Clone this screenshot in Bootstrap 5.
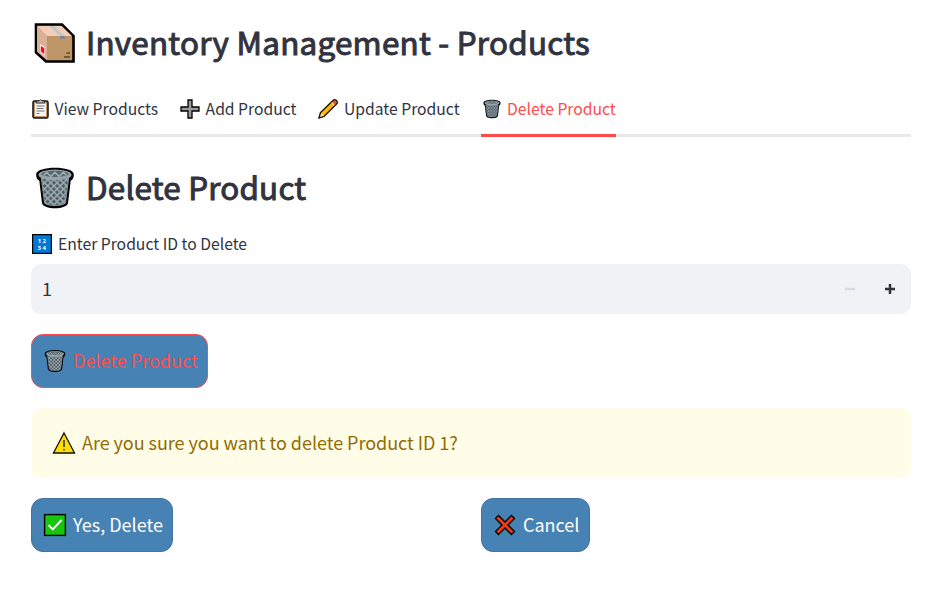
<!DOCTYPE html>
<html lang="en">
<head>
<meta charset="utf-8">
<meta name="viewport" content="width=device-width, initial-scale=1">
<title>Inventory Management</title>
<link href="https://cdn.jsdelivr.net/npm/bootstrap@5.3.0/dist/css/bootstrap.min.css" rel="stylesheet">
<style>
body{font-family:"Noto Sans CJK SC","Source Sans Pro",sans-serif;color:#31333f;background:#fff;overflow:hidden}
.page{width:880px;margin-left:31px;padding-top:20px}
.title{font-size:31.4px;line-height:46px;height:46px;font-weight:400;-webkit-text-stroke:1px #31333f;letter-spacing:.25px;margin:0;white-space:nowrap}
.title svg{width:48px;height:46px;flex:none;margin-right:7px;-webkit-text-stroke:0}
.title span{padding-bottom:2px}
.title-sub{margin-top:28px;letter-spacing:.2px}
.tabs{margin-top:20px;height:51px;border-bottom:3px solid #e8e8eb;gap:21px}
.tabs .nav-link{color:#31333f;font-size:15.7px;line-height:24px;padding:0;height:51px;padding-bottom:2px;border-bottom:3px solid transparent;white-space:nowrap}
.tabs .nav-link.active{color:#ff4b4b;border-color:#ff4b4b}
.tabs svg{width:20px;height:20px;flex:none;margin:0 5.5px 0 1px}
.tabs .nav-link:first-child svg{margin:0 3.4px 0 0}
.field-label{font-size:15.7px;line-height:24px;height:24px;margin-top:21px;margin-bottom:8px}
.field-label svg{width:20px;height:20px;margin:0 6px 0 1px}
.number{height:50px;background:#f0f2f6;border-radius:10px;font-size:18px;padding-left:11px;padding-right:1px}
.number button{width:40px;height:50px;border:0;background:none;padding:0}
.number span{padding-bottom:2px}
.btn-steel{background:#4682b4;border:1px solid #4174a2;border-radius:12px;color:#fff;height:54px;font-size:18px;line-height:28px;padding:0 0 0 11px;white-space:nowrap;text-align:left}
.btn-steel:hover{background:#4682b4;color:#fff}
.btn-steel svg{width:24px;height:24px;flex:none;margin-right:6px}
.btn-steel span,.notice span{padding-bottom:2px}
.btn-steel.danger,.btn-steel.danger:hover{color:#ff4b4b;border-color:#ff4b4b}
.btn-delete{width:177px;margin-top:20px}
.btn-yes{width:142px}
.btn-cancel{width:109px}
.choice{width:450px}
.notice{height:70px;background:#fffce7;border:0;border-radius:10px;color:#926c05;font-size:18px;line-height:28px;letter-spacing:-.04px;padding:0 0 0 21px;margin:20px 0}
.notice svg{width:24px;height:24px;margin-right:6px}
</style>
<script src="https://cdn.jsdelivr.net/npm/bootstrap@5.3.0/dist/js/bootstrap.bundle.min.js"></script>
</head>
<body>
<svg width="0" height="0" class="position-absolute" aria-hidden="true">
  <defs>
    <pattern id="mesh" width="6" height="6" patternUnits="userSpaceOnUse" x="1" y="1">
      <rect width="6" height="6" fill="#4d5960"/><path d="M0 0l6 6M6 0L0 6" stroke="#9aabb2" stroke-width="1.5"/>
    </pattern>
    <symbol id="bin" viewBox="0 0 40 42">
      <path d="M2 8C2 -.5 38 -.5 38 8C38 11 37 13 35 14L32.500 35C32 42 8 42 7.500 35L5 14C3 13 2 11 2 8Z" fill="#000"/>
      <path d="M7 12L10 35C11 38.500 29 38.500 30 35L33 12Z" fill="url(#mesh)" stroke="#849399" stroke-width="1"/>
      <ellipse cx="20" cy="8.500" rx="15.800" ry="5.200" fill="#94a4ab"/>
      <ellipse cx="20" cy="7.500" rx="13" ry="3" fill="#59666c"/>
      <path d="M9 9l3-3 4 4 4-4 4 4 4-4 3 3" fill="none" stroke="#a4b1b5" stroke-width="1.500"/>
    </symbol>
  </defs>
</svg>
<main class="page">
  <h1 class="title d-flex align-items-center"><svg viewBox="0 0 48 46"><path d="M5 4.500H31L42.500 16V41.500H15L5 32.500Z" fill="#be9667" stroke="#000" stroke-width="2.600"/><path d="M6 6H30.500L41 16H16Z" fill="#f3cdb8"/><path d="M6 6L16 16V40L6 31.500Z" fill="#dcb094"/><path d="M18 6h5l11 10h-5Z" fill="#c2c6c8"/><path d="M29 16h5v3h-5Z" fill="#87888a"/><path d="M9 24l5 3v9l-5-4Z" fill="#fff0ec"/><path d="M9.800 26l3.500 2v6l-3.500-2.500Z" fill="#e81224"/><path d="M35.500 33h3.500M33 37h6" stroke="#594735" stroke-width="1.600"/></svg><span>Inventory Management - Products</span></h1>

  <nav class="nav tabs flex-nowrap">
    <a class="nav-link d-flex align-items-center" href="#"><svg viewBox="0 0 20 20"><rect x="2" y="2" width="15" height="17" rx="1.500" fill="#c39468" stroke="#111" stroke-width="1.500"/><path d="M4 4.500h11v12.500h-11Z" fill="#f5f5f5"/><path d="M5.500 4V2h2.500Q9.500-1 11 2H13.500V4Z" fill="#bbb" stroke="#222" stroke-width=".8"/><path d="M5.500 7h8M5.500 9.500h7M5.500 12h8M5.500 14.500h3" stroke="#777" stroke-width="1"/></svg><span>View Products</span></a>
    <a class="nav-link d-flex align-items-center" href="#"><svg viewBox="0 0 20 20"><path d="M8 1h4v7h7v4h-7v7H8v-7H1V8h7Z" fill="#9b9b9b" stroke="#000" stroke-width="1.300"/></svg><span>Add Product</span></a>
    <a class="nav-link d-flex align-items-center" href="#"><svg viewBox="0 0 20 20"><path d="M1 19L2.500 13.500L15 1.500Q16.500 0 18.500 1.500Q20 3.500 18.500 5L6 17.500Z" fill="#ffb900" stroke="#111" stroke-width="1.400"/><path d="M2 18l1.400-4 2.800 2.500Z" fill="#f4d2ae"/><path d="M14.500 3l1-1q1.500-1 2.500.3 1 1.400 0 2.500l-1 1Z" fill="#e74856"/><path d="M13.500 3.800l2.700 2.700" stroke="#ccc" stroke-width="1.300"/></svg><span>Update Product</span></a>
    <a class="nav-link active d-flex align-items-center" href="#"><svg viewBox="0 0 40 42"><use href="#bin"/></svg><span>Delete Product</span></a>
  </nav>

  <h2 class="title title-sub d-flex align-items-center"><svg viewBox="-2 -1 44 44"><use href="#bin" width="40" height="42"/></svg><span>Delete Product</span></h2>

  <label class="field-label d-flex align-items-center"><svg viewBox="0 0 20 20"><rect x=".6" y=".6" width="18.800" height="18.800" fill="#0078d7" stroke="#000" stroke-width="1.200"/><g fill="#fff" font-size="6" font-weight="700" font-family="Open Sans,sans-serif"><text x="5.800" y="9">1</text><text x="10.600" y="9">2</text><text x="5.600" y="16">3</text><text x="10.600" y="16">4</text></g></svg><span>Enter Product ID to Delete</span></label>
  <div class="number d-flex align-items-center"><span class="me-auto">1</span><button aria-label="Decrease"><svg width="10" height="10" class="d-block mx-auto"><path d="M0 5h10" stroke="#d7dae5" stroke-width="2.500"/></svg></button><button aria-label="Increase"><svg width="10" height="10" class="d-block mx-auto"><path d="M0 5h10M5 0v10" stroke="#31333f" stroke-width="2.500"/></svg></button></div>

  <button class="btn btn-steel btn-delete danger d-flex align-items-center"><svg viewBox="0 0 40 42"><use href="#bin"/></svg><span>Delete Product</span></button>

  <div class="alert notice d-flex align-items-center" role="alert"><svg viewBox="0 0 24 24"><path d="M12 2L22.500 22H1.500Z" fill="#ffde00" stroke="#111" stroke-width="1.300"/><path d="M12 9v7M12 18v1.600" stroke="#222" stroke-width="1.400"/></svg><span>Are you sure you want to delete Product ID 1?</span></div>

  <div class="d-flex">
    <div class="choice"><button class="btn btn-steel btn-yes d-flex align-items-center"><svg viewBox="0 0 24 24"><rect x="1.600" y="1.600" width="20.800" height="20.800" fill="#16c60c" stroke="#000" stroke-width="1.400"/><path d="M5.500 12l4.300 4.300L18.500 7" fill="none" stroke="#fff" stroke-width="1.900"/></svg><span>Yes, Delete</span></button></div>
    <button class="btn btn-steel btn-cancel d-flex align-items-center"><svg viewBox="0 0 24 24"><path d="M5.500 2.500L12 9L18.500 2.500L21.500 5.500L15 12L21.500 18.500L18.500 21.500L12 15L5.500 21.500L2.500 18.500L9 12L2.500 5.500Z" fill="#f03a17" stroke="#000" stroke-width="1.400"/></svg><span>Cancel</span></button>
  </div>
</main>
</body>
</html>
